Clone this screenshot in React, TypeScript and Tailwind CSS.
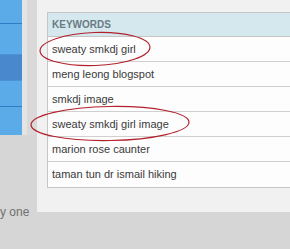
import React from "react";

const rows = [
  "sweaty smkdj girl",
  "meng leong blogspot",
  "smkdj image",
  "sweaty smkdj girl image",
  "marion rose caunter",
  "taman tun dr ismail hiking",
];

export default function App() {
  return (
    <div
      className="relative flex w-[290px] h-[249px] overflow-hidden bg-[#d6d6d6]"
      style={{ fontFamily: '"Liberation Sans", Arial, sans-serif' }}
    >
      {/* left column */}
      <div className="flex flex-col w-[37px] shrink-0">
        <div className="flex h-[135px]">
          <div className="flex flex-col w-[22px] bg-[#58a9e7]">
            <div className="h-[23px] bg-[#5aabe8]" />
            <div className="h-px bg-[#2f7cc6]" />
            <div className="h-[30px] bg-[#5aabe8]" />
            <div className="h-px bg-[#4b93d6]" />
            <div className="h-[25px] bg-[#4a88cd]" />
            <div className="h-px bg-[#4b93d6]" />
            <div className="h-[25px] bg-[#5aabe8]" />
            <div className="h-px bg-[#2f7cc6]" />
            <div className="flex-1 bg-[#5aabe8]" />
          </div>
          <div className="w-[5px] bg-[#e4e4e4]" />
          <div className="w-[10px] bg-[#d9d9d9]" />
        </div>
        <div className="flex flex-col flex-1">
          <div className="h-[70px]" />
          <div className="whitespace-nowrap text-[12px] leading-[14px] text-[#707070]">
            y one
          </div>
        </div>
      </div>

      {/* main panel */}
      <div className="flex flex-col flex-1">
        <div className="h-[212px] bg-[#f1f1f1] pt-[12px] pl-[10px]">
          <div className="border-t border-l border-b border-[#c6c6c6] bg-white">
            <div className="h-[24px] flex items-center pl-[4px] bg-[#d4e8ee] border-b border-[#c6c6c6] text-[10px] font-bold text-[#6b7b83]">
              KEYWORDS
            </div>
            {rows.map((r, i) => (
              <div
                key={i}
                className={`h-[25px] flex items-center pl-[4px] text-[11px] text-[#3a3a3a] bg-[#fdfdfd] ${
                  i < rows.length - 1 ? "border-b border-[#d0d0d0]" : ""
                }`}
              >
                {r}
              </div>
            ))}
          </div>
        </div>
      </div>

      {/* annotation ellipses */}
      <svg
        className="absolute inset-0 pointer-events-none"
        width="290"
        height="249"
        viewBox="0 0 290 249"
      >
        <ellipse
          cx="95"
          cy="49"
          rx="55"
          ry="16.5"
          fill="none"
          stroke="#b3202b"
          strokeWidth="1.2"
          transform="rotate(-2 95 49)"
        />
        <ellipse
          cx="110"
          cy="123.5"
          rx="79"
          ry="17"
          fill="none"
          stroke="#b3202b"
          strokeWidth="1.2"
          transform="rotate(-1 110 123.5)"
        />
      </svg>
    </div>
  );
}
